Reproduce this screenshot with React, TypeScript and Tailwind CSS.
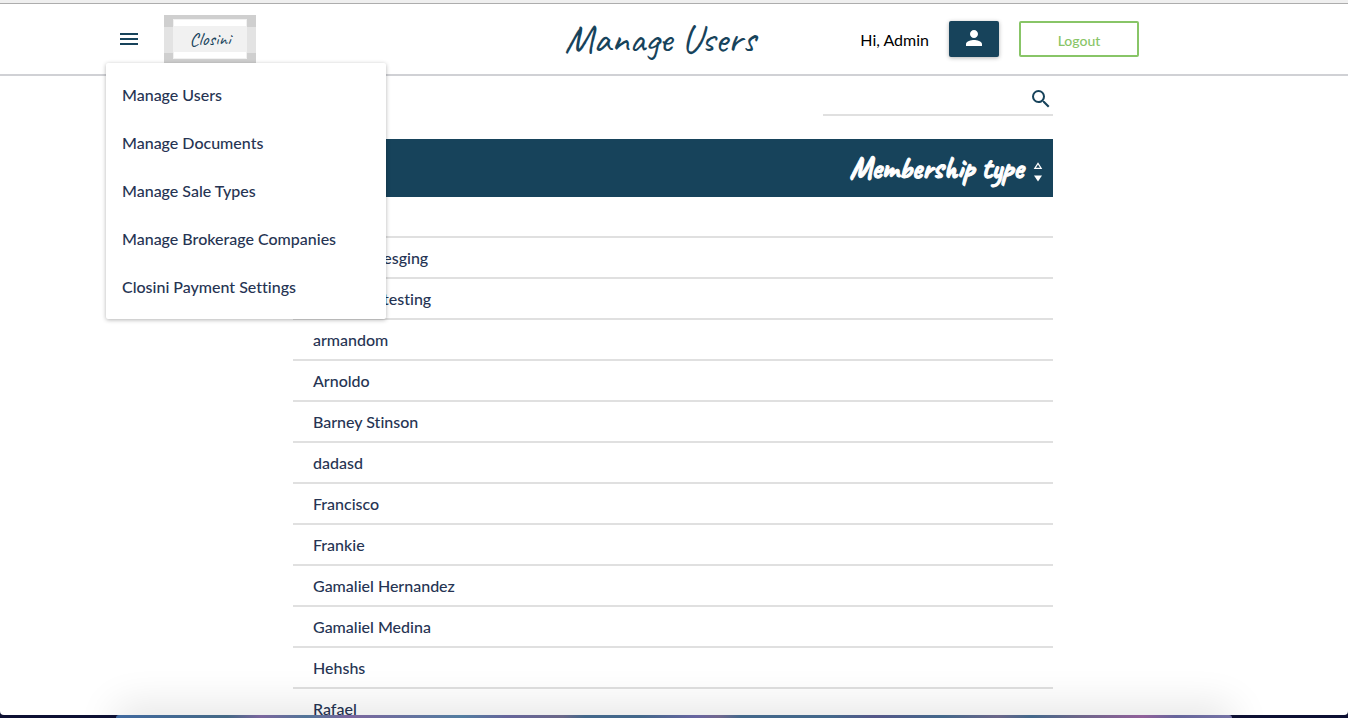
import { MdMenu, MdPerson, MdSearch } from "react-icons/md";

const menuItems = [
  "Manage Users",
  "Manage Documents",
  "Manage Sale Types",
  "Manage Brokerage Companies",
  "Closini Payment Settings",
];

const users = [
  "admin",
  "armand mesging",
  "armandoi testing",
  "armandom",
  "Arnoldo",
  "Barney Stinson",
  "dadasd",
  "Francisco",
  "Frankie",
  "Gamaliel Hernandez",
  "Gamaliel Medina",
  "Hehshs",
  "Rafael",
];

function Logo() {
  return (
    <a
      href="#home"
      aria-label="Closini"
      className="flex h-[49px] w-[92px] items-center justify-center bg-[linear-gradient(to_bottom,#cfcfcf_12px,#e3e3e3_12px,#e3e3e3_38px,#cfcfcf_38px)]"
    >
      <span className="flex h-10 w-[74px] items-center justify-center border border-[#f1f1f1] bg-[linear-gradient(to_bottom,#fff_6px,#f1f1f1_6px,#f1f1f1_32px,#fff_32px)] font-['Caveat','Lato',cursive] text-[19px] font-medium text-[#17435b]">
        Closini
      </span>
    </a>
  );
}

function NavMenu() {
  return (
    <nav className="absolute left-0 top-[59px] z-10 w-[280px] rounded-xs bg-white py-2 shadow-[0_1px_4px_rgba(0,0,0,0.3)]">
      <ul>
        {menuItems.map((item) => (
          <li key={item}>
            <a href="#menu" className="flex h-12 items-center px-4">
              {item}
            </a>
          </li>
        ))}
      </ul>
    </nav>
  );
}

function Header() {
  return (
    <header className="flex h-[72px] shrink-0 justify-center border-b-2 border-[#d0d1d5]">
      <div className="relative grid w-full max-w-[1136px] grid-cols-[1fr_auto_1fr] items-center pr-7">
        <div className="flex items-center">
          <button type="button" aria-label="Menu" className="mr-[23px] pl-[11px] text-[#17435b]">
            <MdMenu size={24} />
          </button>
          <Logo />
        </div>
        <h1 className="font-['Caveat','Lato',cursive] text-[40px] leading-10 font-medium text-[#17435b]">
          Manage Users
        </h1>
        <div className="flex items-center justify-end gap-5 pr-[75px]">
          <span className="pt-0.5 font-normal text-black">Hi, Admin</span>
          <button
            type="button"
            aria-label="Profile"
            className="flex h-9 w-[50px] items-center justify-center rounded-xs bg-[#17435b] text-white shadow-[0_1px_4px_rgba(0,0,0,0.3)]"
          >
            <MdPerson size={24} className="mb-0.5" />
          </button>
          <button
            type="button"
            className="h-9 w-[120px] rounded-xs border-2 border-[#88c567] pt-1 text-sm text-[#88c567]"
          >
            Logout
          </button>
        </div>
        <NavMenu />
      </div>
    </header>
  );
}

function SortIcon() {
  return (
    <svg width="10" height="20" viewBox="0 0 10 20" aria-hidden="true">
      <path d="M1.8 6.4 5 1.4 8.2 6.4Z" fill="none" stroke="#fff" strokeWidth="1.2" />
      <path d="M1 13.5h8L5 19.5Z" fill="#fff" />
    </svg>
  );
}

function UserTable() {
  return (
    <table className="mt-[23px] w-full border-collapse text-left">
      <thead className="bg-[#17435b] text-white">
        <tr className="h-[58px] font-['Caveat','Lato',cursive] text-3xl">
          <th className="px-5 font-bold">Name</th>
          <th className="pr-2.5 font-bold">
            <button type="button" className="ml-auto flex items-center gap-2.5 [-webkit-text-stroke:1px_#fff]">
              Membership type
              <span className="pt-2">
                <SortIcon />
              </span>
            </button>
          </th>
        </tr>
      </thead>
      <tbody>
        {users.map((name) => (
          <tr key={name} className="h-[41px] bg-[linear-gradient(to_top,#e0e0e0_2px,transparent_2px)]">
            <td className="px-5 pb-0.5">{name}</td>
            <td />
          </tr>
        ))}
      </tbody>
    </table>
  );
}

export default function App() {
  return (
    <div className="flex h-screen flex-col overflow-hidden bg-[#0d1033] font-['Lato',sans-serif] text-base font-medium text-[#263453] [font-variant-ligatures:no-common-ligatures]">
      <div className="relative flex min-h-0 flex-1 flex-col overflow-hidden rounded-b-sm bg-white">
        <div className="h-1 shrink-0 border-b border-[#adadad] bg-[#efefef]" />
        <Header />
        <main className="min-h-0 flex-1 overflow-hidden pr-0.5">
          <div className="mx-auto max-w-[760px]">
            <label className="ml-auto flex h-10 w-[230px] items-center border-b-2 border-[#e0e0e0] pt-2">
              <input type="text" aria-label="Search users" className="min-w-0 flex-1 outline-none" />
              <MdSearch size={24} className="text-[#17435b]" />
            </label>
            <UserTable />
          </div>
        </main>
        <div className="pointer-events-none absolute inset-x-[136px] -bottom-3 h-px shadow-[0_0_40px_20px_rgba(0,0,0,0.11)]" />
      </div>
      <div className="h-[3px] shrink-0 px-[116px]">
        <div className="h-full rounded-t-sm bg-[linear-gradient(to_right,#40699f,#456986_10%,#7b669e_13%,#527598_17%,#7b669e_21%,#527da0_31%,#66659b_35%,#6a6788_40%,#43688b_42%,#43688b_47%,#6865a0_52%,#71678e_54%,#43688b_56%,#43688b_64%,#555789_68%,#43688b_74%,#6b6689_79%,#43688b_82%,#6b6689_86%,#91609a_92%,#66659b_95%,#7573a5)]" />
      </div>
    </div>
  );
}
